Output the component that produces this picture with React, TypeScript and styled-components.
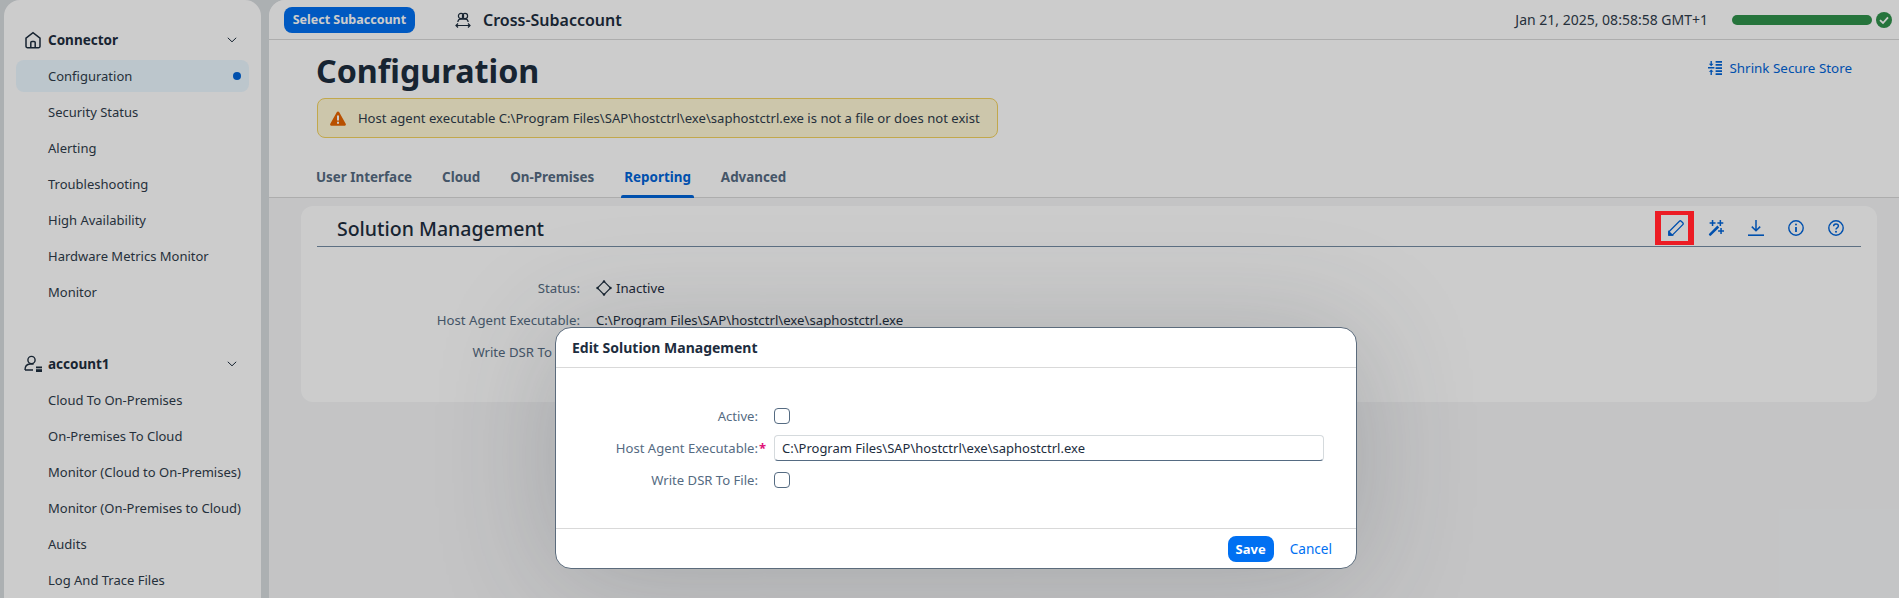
import * as React from 'react'
import styled, { createGlobalStyle } from 'styled-components'

const connectorItems = ['Configuration', 'Security Status', 'Alerting', 'Troubleshooting', 'High Availability', 'Hardware Metrics Monitor', 'Monitor']
const accountItems = ['Cloud To On-Premises', 'On-Premises To Cloud', 'Monitor (Cloud to On-Premises)', 'Monitor (On-Premises to Cloud)', 'Audits', 'Log And Trace Files']
const tabs = ['User Interface', 'Cloud', 'On-Premises', 'Reporting', 'Advanced']
const PATH = 'C:\\Program Files\\SAP\\hostctrl\\exe\\saphostctrl.exe'

export default function App() {
    return (
        <Shell>
            <GlobalStyle />
            <Sidebar>
                <NavHeading>
                    <HomeIcon />
                    <span>Connector</span>
                    <Chevron />
                </NavHeading>
                {connectorItems.map((item, i) => (
                    <NavItem key={item} $active={i === 0}>
                        {item}
                        {i === 0 && <ActiveDot />}
                    </NavItem>
                ))}
                <NavGap />
                <NavHeading>
                    <AccountIcon />
                    <span>account1</span>
                    <Chevron />
                </NavHeading>
                {accountItems.map(item => (
                    <NavItem key={item}>{item}</NavItem>
                ))}
            </Sidebar>
            <Main>
                <TopBar>
                    <SelectButton>Select Subaccount</SelectButton>
                    <CrossIcon />
                    <CrossLabel>Cross-Subaccount</CrossLabel>
                    <DateText>Jan 21, 2025, 08:58:58 GMT+1</DateText>
                    <HealthBar />
                    <CheckIcon />
                </TopBar>
                <PageHeader>
                    <TitleRow>
                        <Title>Configuration</Title>
                        <ShrinkLink>
                            <ShrinkIcon />
                            Shrink Secure Store
                        </ShrinkLink>
                    </TitleRow>
                    <Strip>
                        <WarningIcon />
                        Host agent executable {PATH} is not a file or does not exist
                    </Strip>
                    <Tabs>
                        {tabs.map(tab => (
                            <Tab key={tab} $active={tab === 'Reporting'}>
                                {tab}
                            </Tab>
                        ))}
                    </Tabs>
                </PageHeader>
                <Panel>
                    <PanelHeader>
                        <PanelTitle>Solution Management</PanelTitle>
                        <PanelActions>
                            <ActionButton>
                                <PencilIcon />
                            </ActionButton>
                            <ActionButton>
                                <WandIcon />
                            </ActionButton>
                            <ActionButton>
                                <DownloadIcon />
                            </ActionButton>
                            <ActionButton>
                                <InfoIcon />
                            </ActionButton>
                            <ActionButton>
                                <HelpIcon />
                            </ActionButton>
                        </PanelActions>
                    </PanelHeader>
                    <Details>
                        <DetailLabel>Status:</DetailLabel>
                        <DetailValue>
                            <DiamondIcon />
                            Inactive
                        </DetailValue>
                        <DetailLabel>Host Agent Executable:</DetailLabel>
                        <DetailValue>{PATH}</DetailValue>
                        <DetailLabel>Write DSR To File:</DetailLabel>
                        <DetailValue>Off</DetailValue>
                    </Details>
                </Panel>
            </Main>
            <Overlay />
            <RedMark />
            <Dialog>
                <DialogTitle>Edit Solution Management</DialogTitle>
                <DialogBody>
                    <FormLabel>Active:</FormLabel>
                    <Checkbox />
                    <FormLabel>
                        Host Agent Executable:<Required>*</Required>
                    </FormLabel>
                    <FieldInput readOnly value={PATH} />
                    <FormLabel>Write DSR To File:</FormLabel>
                    <Checkbox />
                </DialogBody>
                <DialogFooter>
                    <SaveButton>Save</SaveButton>
                    <CancelButton>Cancel</CancelButton>
                </DialogFooter>
            </Dialog>
        </Shell>
    )
}

function HomeIcon() {
    return (
        <NavIcon viewBox="0 0 18 18" fill="none" stroke="#1d2d3e" strokeWidth="1.5">
            <path d="M2 15.2V7.2L9 1.6l7 5.6v8a1.6 1.6 0 0 1-1.6 1.6H3.6A1.6 1.6 0 0 1 2 15.2z" />
            <path d="M6.8 16.6v-5a1.2 1.2 0 0 1 1.2-1.2h2a1.2 1.2 0 0 1 1.2 1.2v5" />
        </NavIcon>
    )
}

function AccountIcon() {
    return (
        <NavIcon viewBox="0 0 18 18" fill="none" stroke="#1d2d3e" strokeWidth="1.4">
            <circle cx="7.5" cy="5" r="3.6" />
            <path d="M1 15c0-3.4 2-5.8 5-6h3.6M1 15h8" />
            <rect x="12" y="11.5" width="6" height="1.8" fill="#1d2d3e" stroke="none" />
            <rect x="12" y="14.2" width="6" height="2.8" fill="#1d2d3e" stroke="none" />
        </NavIcon>
    )
}

function Chevron() {
    return (
        <ChevronSvg viewBox="0 0 10 6" fill="none" stroke="#1d2d3e" strokeWidth="1">
            <path d="M.8.8 5 4.8 9.2.8" />
        </ChevronSvg>
    )
}

function CrossIcon() {
    return (
        <CrossSvg viewBox="0 0 16 16" fill="none" stroke="#1d2d3e" strokeWidth="1.2">
            <circle cx="6" cy="4" r="2.6" />
            <circle cx="10" cy="4" r="2.6" />
            <path d="M2.8 10c.2-1.8 1.4-2.8 3-2.8h4.4c1.6 0 2.8 1 3 2.8" />
            <path d="M1 13.5h14M3 11.5l-2 2 2 2M13 11.5l2 2-2 2" />
        </CrossSvg>
    )
}

function CheckIcon() {
    return (
        <CheckSvg viewBox="0 0 16 16">
            <circle cx="8" cy="8" r="8" fill="#30914c" />
            <path d="M4 8.2 7 11l5-5.6" fill="none" stroke="#fff" strokeWidth="1.8" />
        </CheckSvg>
    )
}

function ShrinkIcon() {
    return (
        <ShrinkSvg viewBox="0 0 14 14" fill="#0064d9">
            <path d="M2.5 0h1.4v2.8h1.7L3.2 5.2.8 2.8h1.7zM3.2 8.4l2.4 2.4H3.9V14H2.5v-3.2H.8z" />
            <path d="M0 6.1h6.4v1.3H0zM7.6 0H14v1.7H7.6zM7.6 3.1H14v1.7H7.6zM7.6 6.2H14v1.7H7.6zM7.6 9.3H14v1.7H7.6zM7.6 12.3H14V14H7.6z" />
        </ShrinkSvg>
    )
}

function WarningIcon() {
    return (
        <WarningSvg viewBox="0 0 16 15">
            <path d="M8 .4c.5 0 .9.3 1.1.7l6.6 11.7c.5.9-.1 1.9-1.1 1.9H1.4c-1 0-1.6-1-1.1-1.9L6.9 1.1C7.1.7 7.5.4 8 .4z" fill="#e76500" />
            <path d="M7 4.4h2v5.2H7zM7 10.8h2v2H7z" fill="#fff" />
        </WarningSvg>
    )
}

function PencilIcon() {
    return (
        <ActionSvg viewBox="0 0 16 16" fill="none" stroke="#0064d9" strokeWidth="1.3">
            <path d="M.9 15.1v-3.4L11.4 1.2a1.3 1.3 0 0 1 1.8 0l1.6 1.6a1.3 1.3 0 0 1 0 1.8L4.3 15.1z" />
            <path d="M.9 15.1h3.4L.9 11.7z" fill="#0064d9" />
        </ActionSvg>
    )
}

function WandIcon() {
    return (
        <ActionSvg viewBox="0 0 16 16" fill="#0064d9">
            <path d="M9.4 5.6 11.2 7.4 3 15.6a1 1 0 0 1-1.4 0l-.4-.4a1 1 0 0 1 0-1.4zM3.8 0h1.5v2.2h2.2v1.5H5.3v2.2H3.8V3.7H1.6V2.2h2.2zM11.6 0h1.5v2.2h2.2v1.5h-2.2v2.2h-1.5V3.7H9.4V2.2h2.2zM12.3 8h1.5v2.2H16v1.5h-2.2v2.2h-1.500v-2.200h-2.200v-1.500h2.200z" />
        </ActionSvg>
    )
}

function DownloadIcon() {
    return (
        <ActionSvg viewBox="0 0 16 16" fill="none" stroke="#0064d9" strokeWidth="1.5">
            <path d="M8 0v10.6M3.8 6.6 8 10.8l4.2-4.2" />
            <path d="M0 15.2h16" strokeWidth="1.6" />
        </ActionSvg>
    )
}

function InfoIcon() {
    return (
        <ActionSvg viewBox="0 0 16 16" fill="none" stroke="#0064d9" strokeWidth="1.4">
            <circle cx="8" cy="8" r="7.2" />
            <path d="M8 7v5" strokeWidth="1.8" />
            <circle cx="8" cy="4.6" r="1" fill="#0064d9" stroke="none" />
        </ActionSvg>
    )
}

function HelpIcon() {
    return (
        <ActionSvg viewBox="0 0 16 16" fill="none" stroke="#0064d9" strokeWidth="1.4">
            <circle cx="8" cy="8" r="7.2" />
            <path d="M5.6 6.2C5.6 4.8 6.7 4 8 4s2.4.8 2.4 2.1c0 1.8-2.4 1.7-2.4 3.4" />
            <circle cx="8" cy="11.8" r="1" fill="#0064d9" stroke="none" />
        </ActionSvg>
    )
}

function DiamondIcon() {
    return (
        <DiamondSvg viewBox="0 0 16 16" fill="none" stroke="#1d2d3e" strokeWidth="1.1">
            <path d="M8 1.4 14.6 8 8 14.6 1.4 8z" />
            <circle cx="8" cy="1.5" r="1.2" fill="#1d2d3e" stroke="none" />
            <circle cx="8" cy="14.5" r="1.2" fill="#1d2d3e" stroke="none" />
            <circle cx="1.5" cy="8" r="1.2" fill="#1d2d3e" stroke="none" />
            <circle cx="14.5" cy="8" r="1.2" fill="#1d2d3e" stroke="none" />
        </DiamondSvg>
    )
}

const GlobalStyle = createGlobalStyle`
    html, body {
        margin: 0;
        padding: 0;
        height: 100%;
        overflow: hidden;
    }
    body {
        font-family: 'Noto Sans', Arial, sans-serif;
        color: #1d2d3e;
    }
`

const Shell = styled.div`
    position: relative;
    display: flex;
    gap: 8px;
    height: 598px;
    padding-left: 4px;
    box-sizing: border-box;
    overflow: hidden;
    background: #d8dcdf;
`

const Sidebar = styled.nav`
    flex: 0 0 256px;
    box-sizing: border-box;
    padding: 24px 12px 0;
    background: #fff;
    border-radius: 16px 16px 0 0;
`

const NavHeading = styled.div`
    display: flex;
    align-items: center;
    height: 32px;
    margin-bottom: 4px;
    padding-left: 8px;
    font-size: 13.5px;
    font-weight: 700;
    color: #1d2d3e;
`

const NavIcon = styled.svg`
    width: 18px;
    height: 18px;
    margin-right: 6px;
    flex: none;
`

const ChevronSvg = styled.svg`
    width: 10px;
    height: 6px;
    margin-left: auto;
    margin-right: 12px;
`

const NavItem = styled.div<{ $active?: boolean }>`
    display: flex;
    align-items: center;
    justify-content: space-between;
    height: 32px;
    margin-bottom: 4px;
    padding: 0 8px 0 32px;
    border-radius: 8px;
    font-size: 13px;
    white-space: nowrap;
    color: #2f3c4b;
    background: ${props => (props.$active ? '#ebf8ff' : 'transparent')};
`

const ActiveDot = styled.span`
    width: 8px;
    height: 8px;
    border-radius: 50%;
    background: #0064d9;
`

const NavGap = styled.div`
    height: 36px;
`

const Main = styled.main`
    flex: 1;
    min-width: 0;
    display: flex;
    flex-direction: column;
    border-radius: 16px 0 0 0;
    background: #f5f6f7;
`

const TopBar = styled.header`
    display: flex;
    align-items: center;
    box-sizing: border-box;
    flex: none;
    height: 40px;
    padding: 0 7px 0 15px;
    background: #fff;
    border-bottom: 1px solid #d9d9d9;
    border-radius: 16px 0 0 0;
`

const SelectButton = styled.button`
    height: 26px;
    width: 131px;
    padding: 0;
    border: none;
    border-radius: 8px;
    background: #0070f2;
    color: #fff;
    font: 700 12.5px 'Noto Sans', Arial, sans-serif;
`

const CrossSvg = styled.svg`
    width: 16px;
    height: 16px;
    margin-left: 40px;
`

const CrossLabel = styled.span`
    margin-left: 12px;
    font-size: 16px;
    font-weight: 600;
    color: #1d2d3e;
`

const DateText = styled.span`
    margin-left: auto;
    font-size: 14px;
    color: #2f3c4b;
`

const HealthBar = styled.span`
    width: 140px;
    height: 10px;
    margin-left: 24px;
    border-radius: 5px;
    background: #30914c;
`

const CheckSvg = styled.svg`
    width: 16px;
    height: 16px;
    margin-left: 4px;
`

const PageHeader = styled.section`
    box-sizing: border-box;
    flex: none;
    height: 158px;
    padding: 0 48px;
    background: #fff;
    border-bottom: 1px solid #d9d9d9;
`

const TitleRow = styled.div`
    display: flex;
    align-items: center;
    justify-content: space-between;
    height: 58px;
`

const Title = styled.h1`
    margin: 2px 0 0 -1px;
    font-size: 32.3px;
    font-weight: 700;
    color: #1d2d3e;
`

const ShrinkLink = styled.a`
    display: flex;
    align-items: center;
    gap: 7px;
    margin: 0 -1px 2px 0;
    font-size: 13.4px;
    color: #0064d9;
`

const ShrinkSvg = styled.svg`
    width: 14px;
    height: 14px;
`

const Strip = styled.div`
    display: flex;
    align-items: center;
    box-sizing: border-box;
    width: 681px;
    height: 40px;
    padding-left: 12px;
    border: 1px solid #f3d25f;
    border-radius: 8px;
    background: #fff8d6;
    font-size: 13.1px;
    white-space: pre;
    color: #2f3c4b;
`

const WarningSvg = styled.svg`
    width: 16px;
    height: 15px;
    margin-right: 12px;
`

const Tabs = styled.div`
    display: flex;
    gap: 30px;
    margin-top: 27px;
    margin-left: -1px;
`

const Tab = styled.div<{ $active?: boolean }>`
    position: relative;
    height: 33px;
    line-height: 24px;
    font-size: 13.4px;
    font-weight: 700;
    color: ${props => (props.$active ? '#0064d9' : '#556b82')};
    &::after {
        content: '';
        display: ${props => (props.$active ? 'block' : 'none')};
        position: absolute;
        left: -3px;
        right: -3px;
        bottom: 0;
        height: 3px;
        border-radius: 2px 2px 0 0;
        background: #0064d9;
    }
`

const Panel = styled.section`
    width: 1576px;
    height: 196px;
    box-sizing: border-box;
    flex: none;
    margin: 8px 0 0 32px;
    padding: 0 16px;
    border-radius: 12px;
    background: #fff;
`

const PanelHeader = styled.div`
    display: flex;
    align-items: center;
    justify-content: space-between;
    height: 40px;
    padding-left: 20px;
    border-bottom: 1px solid #758ca4;
`

const PanelTitle = styled.h2`
    margin: 4px 0 0;
    font-size: 19.5px;
    font-weight: 500;
    color: #1d2d3e;
`

const PanelActions = styled.div`
    display: flex;
    align-items: center;
    margin-right: 5px;
    margin-top: 4px;
`

const ActionButton = styled.span`
    display: flex;
    align-items: center;
    justify-content: center;
    width: 40px;
    height: 28px;
`

const ActionSvg = styled.svg`
    width: 16px;
    height: 16px;
`

const RedMark = styled.div`
    position: absolute;
    left: 1655px;
    top: 211px;
    width: 39px;
    height: 34px;
    box-sizing: border-box;
    border-style: solid;
    border-width: 4px 6px;
    border-color: #ec1c24;
`

const Details = styled.div`
    display: grid;
    grid-template-columns: 263px 1fr;
    column-gap: 16px;
    grid-auto-rows: 32px;
    align-items: center;
    padding-top: 25px;
    font-size: 13.2px;
`

const DetailLabel = styled.div`
    text-align: right;
    color: #556b82;
`

const DetailValue = styled.div`
    display: flex;
    align-items: center;
    gap: 4px;
    color: #1d2d3e;
`

const DiamondSvg = styled.svg`
    width: 16px;
    height: 16px;
`

const Overlay = styled.div`
    position: absolute;
    inset: 0;
    background: rgba(0, 0, 0, 0.2);
`

const Dialog = styled.div`
    position: absolute;
    left: 555px;
    top: 327px;
    width: 802px;
    height: 242px;
    box-sizing: border-box;
    display: flex;
    flex-direction: column;
    border: 1px solid #5b6b7c;
    border-radius: 16px;
    background: #fff;
    box-shadow: 0 8px 120px rgba(50, 60, 70, 0.22);
`

const DialogTitle = styled.div`
    display: flex;
    align-items: center;
    height: 40px;
    flex: none;
    box-sizing: border-box;
    padding-left: 16px;
    border-bottom: 1px solid #d9d9d9;
    font-size: 14px;
    font-weight: 700;
    color: #1d2d3e;
`

const DialogBody = styled.div`
    flex: 1;
    display: grid;
    grid-template-columns: 218px 550px;
    grid-auto-rows: 32px;
    align-items: center;
    align-content: start;
    padding-top: 32px;
    font-size: 13.1px;
`

const FormLabel = styled.div`
    position: relative;
    padding-right: 16px;
    text-align: right;
    color: #556b82;
`

const Required = styled.span`
    position: absolute;
    right: 8px;
    top: 0;
    color: #df1278;
    font-weight: 700;
`

const Checkbox = styled.span`
    display: block;
    width: 16px;
    height: 16px;
    box-sizing: border-box;
    border: 1px solid #556b82;
    border-radius: 4px;
    background: #fff;
`

const FieldInput = styled.input`
    width: 550px;
    height: 26px;
    box-sizing: border-box;
    padding: 0 7px;
    border: 1px solid #d5dadd;
    border-bottom-color: #556b82;
    border-radius: 4px;
    outline: none;
    font: 13px 'Noto Sans', Arial, sans-serif;
    color: #1d2d3e;
`

const DialogFooter = styled.div`
    display: flex;
    align-items: center;
    justify-content: flex-end;
    gap: 16px;
    box-sizing: border-box;
    height: 40px;
    flex: none;
    padding-right: 24px;
    border-top: 1px solid #d9d9d9;
`

const SaveButton = styled.button`
    width: 46px;
    height: 26px;
    padding: 0;
    border: none;
    border-radius: 8px;
    background: #0070f2;
    color: #fff;
    font: 700 13px 'Noto Sans', Arial, sans-serif;
`

const CancelButton = styled.button`
    padding: 0;
    border: none;
    background: none;
    color: #0070f2;
    font: 13.6px 'Noto Sans', Arial, sans-serif;
`
